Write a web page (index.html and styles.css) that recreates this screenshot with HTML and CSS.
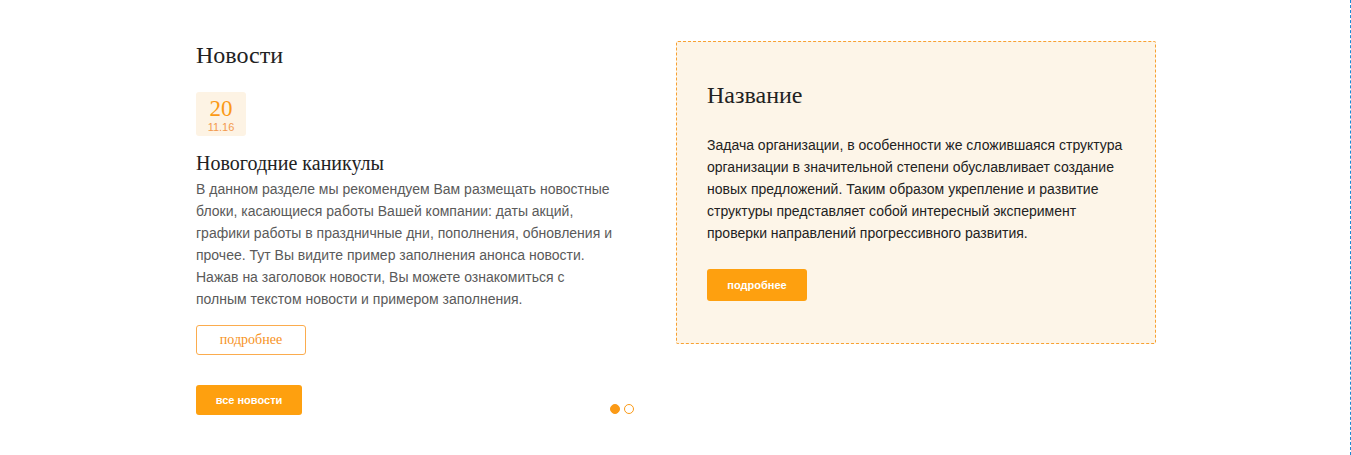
FILE: index.html
```html
<!DOCTYPE html>
<html lang="ru">
<head>
<meta charset="utf-8">
<link rel="stylesheet" href="styles.css">
</head>
<body>
<div class="page">
  <div class="container">
    <section class="news">
      <h2 class="news-title">Новости</h2>
      <div class="date-box">
        <span class="date-day">20</span>
        <span class="date-month">11.16</span>
      </div>
      <h3 class="item-title">Новогодние каникулы</h3>
      <p class="item-text">В данном разделе мы рекомендуем Вам размещать новостные блоки, касающиеся работы Вашей компании: даты акций, графики работы в праздничные дни, пополнения, обновления и прочее. Тут Вы видите пример заполнения анонса новости. Нажав на заголовок новости, Вы можете ознакомиться с полным текстом новости и примером заполнения.</p>
      <a class="btn-outline">подробнее</a>
      <div class="news-bottom">
        <a class="btn-fill btn-all">все новости</a>
        <div class="dots">
          <span class="dot active"></span>
          <span class="dot"></span>
        </div>
      </div>
    </section>
    <section class="card">
      <h2 class="card-title">Название</h2>
      <p class="card-text">Задача организации, в особенности же сложившаяся структура организации в значительной степени обуславливает создание новых предложений. Таким образом укрепление и развитие структуры представляет собой интересный эксперимент проверки направлений прогрессивного развития.</p>
      <a class="btn-fill btn-more">подробнее</a>
    </section>
  </div>
</div>
</body>
</html>
```

FILE: styles.css
```css
html, body {
  margin: 0;
  padding: 0;
  background: #fff;
}
.page {
  height: 455px;
  box-sizing: border-box;
  border-right: 1px dashed #1a8ad4;
  width: 1351px;
}
.container {
  width: 960px;
  margin-left: 196px;
  display: flex;
  padding-top: 41px;
}
.news {
  width: 480px;
  display: flex;
  flex-direction: column;
  align-items: flex-start;
}
.news-title {
  font-family: "Liberation Serif", serif;
  font-weight: normal;
  font-size: 24px;
  line-height: 28px;
  color: #222;
  margin: 0;
}
.date-box {
  margin-top: 23px;
  width: 50px;
  height: 44px;
  background: #fdf3e4;
  border-radius: 3px;
  display: flex;
  flex-direction: column;
  align-items: center;
  box-sizing: border-box;
  padding-top: 5px;
}
.date-day {
  font-family: "Liberation Serif", serif;
  font-size: 23px;
  line-height: 24px;
  color: #fb9a16;
}
.date-month {
  font-family: "Liberation Sans", sans-serif;
  font-size: 11px;
  line-height: 12px;
  color: #f39a4e;
}
.item-title {
  font-family: "Liberation Serif", serif;
  font-weight: normal;
  font-size: 20px;
  line-height: 24px;
  color: #222;
  margin: 15px 0 0;
}
.item-text {
  font-family: "Liberation Sans", sans-serif;
  font-size: 14px;
  line-height: 22px;
  color: #5a5a5a;
  margin: 3px 0 0;
  width: 420px;
}
.btn-outline {
  margin-top: 15px;
  width: 110px;
  height: 30px;
  box-sizing: border-box;
  border: 1px solid #fbac4e;
  border-radius: 3px;
  display: flex;
  align-items: center;
  justify-content: center;
  font-family: "Liberation Serif", serif;
  font-size: 14px;
  color: #f7931e;
}
.news-bottom {
  margin-top: 30px;
  width: 438px;
  display: flex;
  justify-content: space-between;
  align-items: flex-end;
}
.btn-fill {
  background: #fea00f;
  border-radius: 3px;
  color: #fff;
  font-family: "Liberation Sans", sans-serif;
  font-weight: bold;
  font-size: 11px;
  display: flex;
  align-items: center;
  justify-content: center;
  box-sizing: border-box;
}
.btn-all {
  width: 106px;
  height: 30px;
}
.dots {
  display: flex;
  gap: 4px;
  margin-bottom: 1px;
}
.dot {
  width: 10px;
  height: 10px;
  border-radius: 50%;
  box-sizing: border-box;
  border: 1px solid #fb9a16;
  background: #fff;
}
.dot.active {
  background: #fb9a16;
}
.card {
  width: 480px;
  height: 303px;
  box-sizing: border-box;
  background: #fdf5e8;
  border: 1px dashed #f8a132;
  border-radius: 2px;
  padding: 39px 20px 0 30px;
  display: flex;
  flex-direction: column;
  align-items: flex-start;
}
.card-title {
  font-family: "Liberation Serif", serif;
  font-weight: normal;
  font-size: 24px;
  line-height: 28px;
  color: #222;
  margin: 0;
}
.card-text {
  font-family: "Liberation Sans", sans-serif;
  font-size: 14px;
  line-height: 22px;
  color: #222;
  margin: 25px 0 0;
  width: 425px;
}
.btn-more {
  margin-top: 25px;
  width: 100px;
  height: 32px;
}
```
